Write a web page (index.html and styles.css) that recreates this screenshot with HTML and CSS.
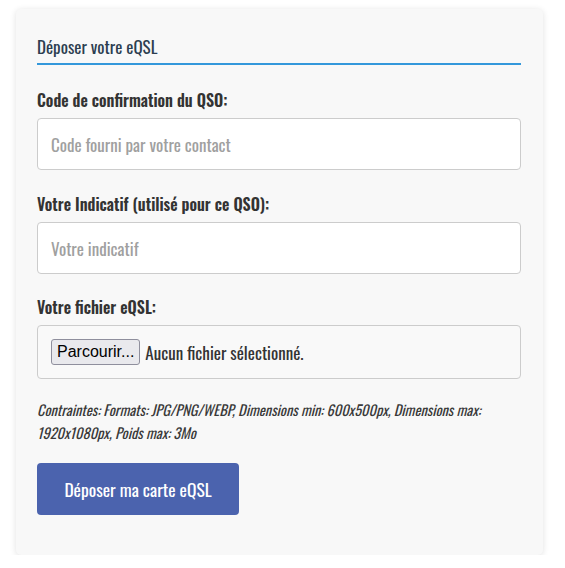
FILE: index.html
```html
<!DOCTYPE html>
<html lang="fr">
<head>
<meta charset="utf-8">
<title>Déposer votre eQSL</title>
<link rel="stylesheet" href="styles.css">
</head>
<body>
<div class="card">
  <h2 class="title">Déposer votre eQSL</h2>
  <form class="form">
    <div class="group">
      <label class="label">Code de confirmation du QSO:</label>
      <input class="field" type="text" placeholder="Code fourni par votre contact">
    </div>
    <div class="group">
      <label class="label">Votre Indicatif (utilisé pour ce QSO):</label>
      <input class="field" type="text" placeholder="Votre indicatif">
    </div>
    <div class="group group-file">
      <label class="label">Votre fichier eQSL:</label>
      <div class="file">
        <span class="file-btn">Parcourir...</span>
        <span class="file-name">Aucun fichier sélectionné.</span>
      </div>
    </div>
    <p class="hint">Contraintes: Formats: JPG/PNG/WEBP, Dimensions min: 600x500px, Dimensions max: 1920x1080px, Poids max: 3Mo</p>
    <button class="submit" type="button">Déposer ma carte eQSL</button>
  </form>
</div>
</body>
</html>
```

FILE: styles.css
```css
html, body {
  margin: 0;
  padding: 0;
  background: #ffffff;
}
body {
  font-family: "Oswald", "DejaVu Sans Condensed", sans-serif;
  color: #333333;
}
.card {
  width: 527px;
  box-sizing: border-box;
  margin: 9px 0 0 16px;
  padding: 26px 22px 40px 21px;
  background: #f8f8f8;
  border-radius: 5px;
  box-shadow: 0 1px 6px rgba(0, 0, 0, 0.12);
}
.title {
  margin: 0 0 23px;
  padding: 0 0 4px;
  font-size: 17px;
  line-height: 24px;
  font-weight: 400;
  color: #2c3e50;
  border-bottom: 2px solid #3498db;
}
.form {
  display: flex;
  flex-direction: column;
}
.group {
  display: flex;
  flex-direction: column;
  gap: 6px;
  margin-bottom: 22px;
}
.group-file {
  margin-top: -1px;
}
.label {
  font-size: 16px;
  line-height: 24px;
  font-weight: 560;
  color: #333333;
}
.field {
  height: 52px;
  box-sizing: border-box;
  border: 1px solid #cccccc;
  border-radius: 4px;
  background: #ffffff;
  padding: 0 13px;
  font-family: inherit;
  font-size: 17px;
  font-weight: 400;
  color: #333333;
}
.field::placeholder {
  color: #a0a0a0;
}
.file {
  height: 54px;
  box-sizing: border-box;
  border: 1px solid #cccccc;
  border-radius: 4px;
  background: #f9f9f9;
  padding: 0 13px;
  display: flex;
  align-items: center;
  gap: 5px;
}
.file-btn {
  font-family: "Liberation Sans", Arial, sans-serif;
  font-size: 16px;
  line-height: 24px;
  padding: 0 5px;
  background: #e9e9ed;
  border: 1px solid #8f8f9d;
  border-radius: 3px;
  color: #000000;
}
.file-name {
  font-size: 17px;
  font-weight: 400;
  color: #333333;
}
.hint {
  margin: -3px 0 19px;
  font-size: 14.4px;
  line-height: 23px;
  font-style: italic;
  font-weight: 400;
  color: #3a3a3a;
}
.submit {
  align-self: flex-start;
  width: 202px;
  height: 52px;
  border: none;
  border-radius: 4px;
  background: #4b63ae;
  color: #ffffff;
  font-family: inherit;
  font-size: 17.5px;
  font-weight: 450;
}
```
